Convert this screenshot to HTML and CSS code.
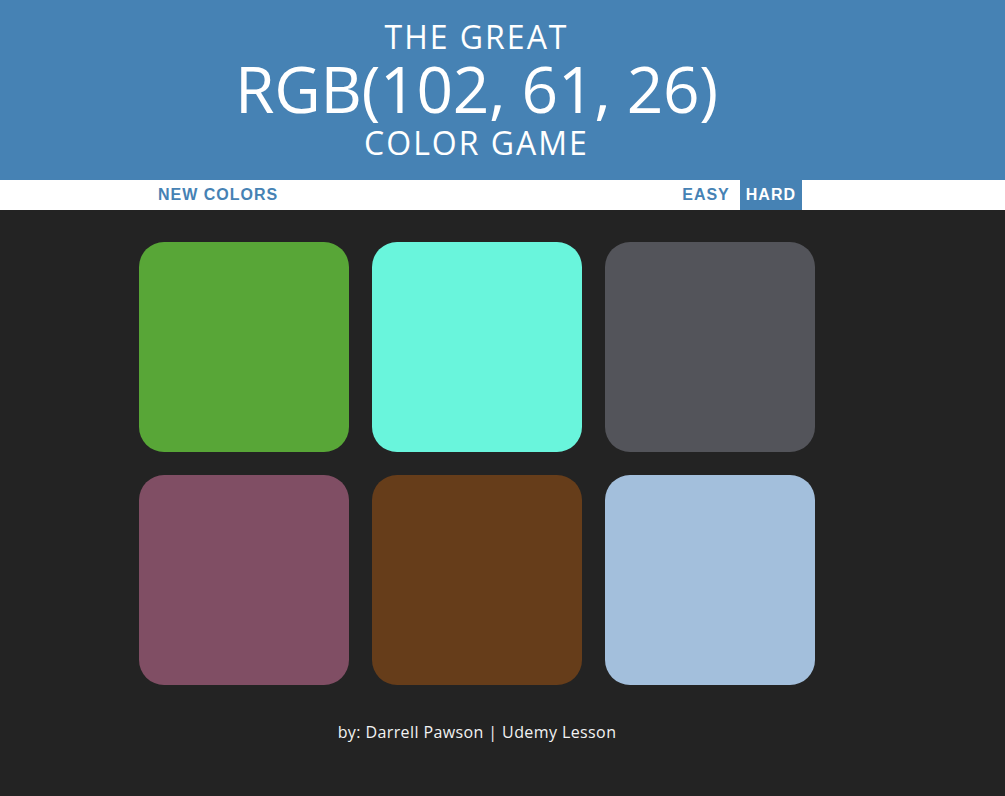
FILE: index.html
```html
<!DOCTYPE html>
<html lang="en">
<head>
<meta charset="utf-8">
<title>Color Game</title>
<link rel="stylesheet" href="styles.css">
</head>
<body>
  <header class="header">
    <h1 class="title">
      <span class="title-small">THE GREAT</span>
      <span class="title-big">RGB(102, 61, 26)</span>
      <span class="title-small title-last">COLOR GAME</span>
    </h1>
  </header>
  <nav class="stripe">
    <div class="stripe-inner">
      <button class="btn">New Colors</button>
      <div class="modes">
        <button class="btn btn-easy">Easy</button>
        <button class="btn selected">Hard</button>
      </div>
    </div>
  </nav>
  <main class="board">
    <div class="grid">
      <div class="square sq1"></div>
      <div class="square sq2"></div>
      <div class="square sq3"></div>
      <div class="square sq4"></div>
      <div class="square sq5"></div>
      <div class="square sq6"></div>
    </div>
    <p class="credit">by: Darrell Pawson | Udemy Lesson</p>
  </main>
</body>
</html>
```
FILE: styles.css
```css
html, body {
  margin: 0;
  padding: 0;
}
body {
  background: #232323;
  font-family: "Open Sans", "Liberation Sans", sans-serif;
  min-height: 796px;
}
.header {
  background: #4682b4;
  color: #fff;
  padding: 17px 52px 15px 0;
  height: 148px;
}
.title {
  margin: 0;
  text-align: center;
  font-weight: 400;
}
.title-small {
  display: block;
  font-size: 32px;
  line-height: 40px;
  letter-spacing: 2px;
}
.title-last {
  line-height: 44px;
}
.title-big {
  display: block;
  font-size: 64px;
  line-height: 64px;
  letter-spacing: -0.3px;
}
.stripe {
  background: #fff;
  height: 30px;
  padding-right: 51px;
}
.stripe-inner {
  width: 650px;
  margin: 0 auto;
  display: flex;
  justify-content: space-between;
  height: 30px;
}
.modes {
  display: flex;
}
.btn {
  border: none;
  background: #fff;
  color: #4682b4;
  font-family: "Liberation Sans", Arial, sans-serif;
  font-weight: 700;
  font-size: 16px;
  letter-spacing: 1px;
  text-transform: uppercase;
  height: 30px;
  padding: 0 6px;
  margin: 0;
  cursor: pointer;
}
.btn-easy {
  margin-right: 4px;
}
.btn.selected {
  background: #4682b4;
  color: #fff;
}
.board {
  padding: 32px 51px 0 0;
}
.grid {
  width: 676px;
  margin: 0 auto;
  display: grid;
  grid-template-columns: repeat(3, 210px);
  grid-auto-rows: 210px;
  gap: 23px;
}
.square {
  border-radius: 25px;
}
.sq1 { background: #58a637; }
.sq2 { background: #69f5dc; }
.sq3 { background: #53545a; }
.sq4 { background: #804e64; }
.sq5 { background: #663d1a; }
.sq6 { background: #a3bfdc; }
.credit {
  margin: 35px 0 0;
  text-align: center;
  color: #f2f2f2;
  font-size: 16px;
  line-height: 24px;
  letter-spacing: 0.4px;
}
```
